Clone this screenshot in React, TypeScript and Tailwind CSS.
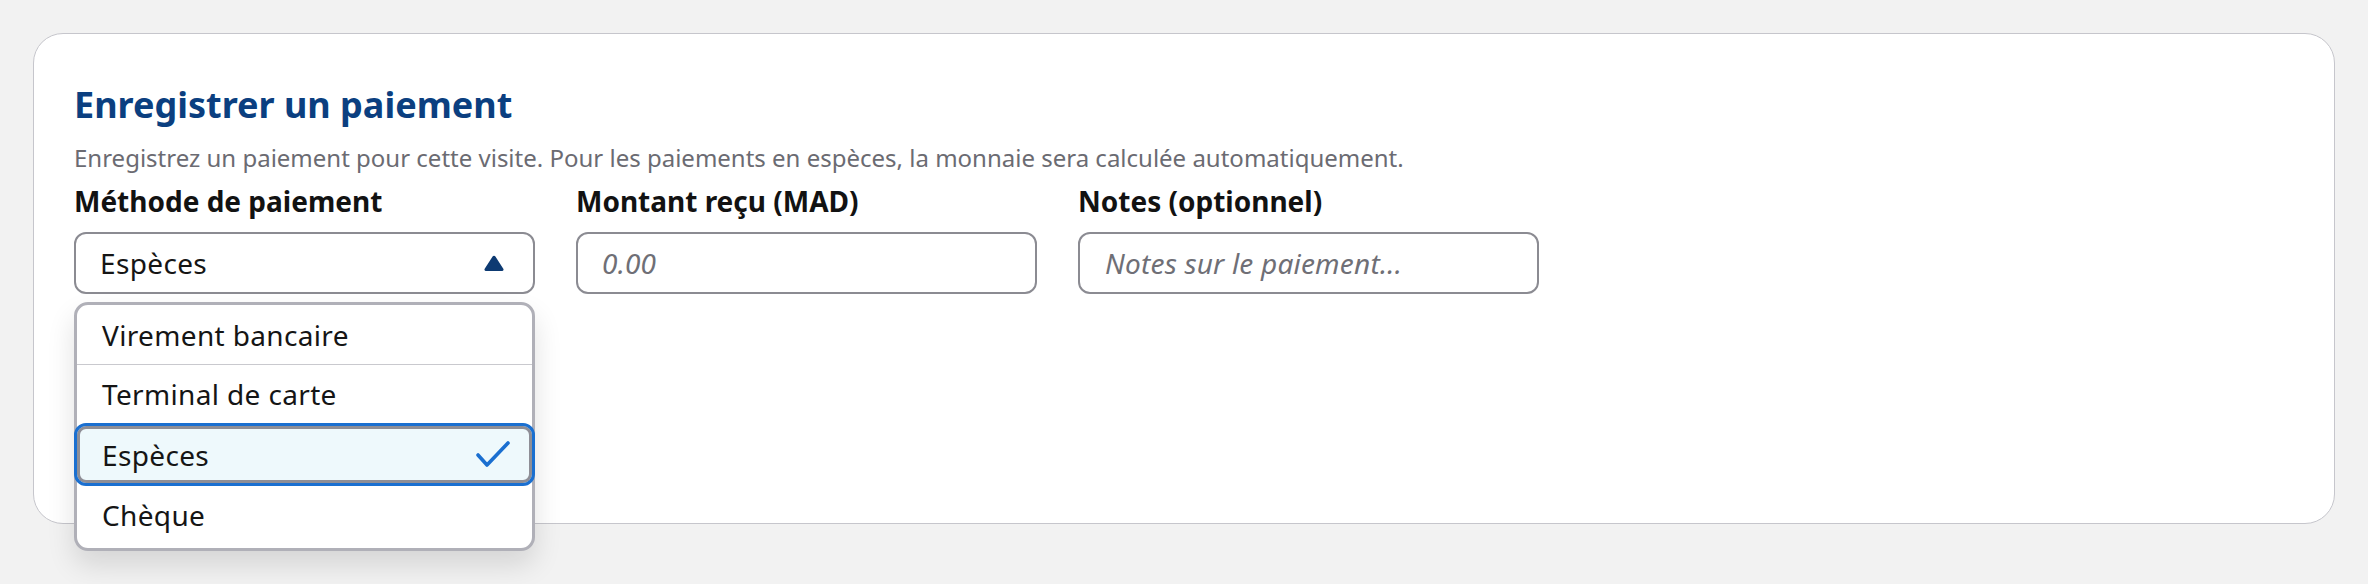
const methods = ["Virement bancaire", "Terminal de carte", "Espèces", "Chèque"];

const font = "font-['Noto_Sans',sans-serif]";

function CaretUp() {
  return (
    <svg width="20" height="16" viewBox="0 0 20 16" aria-hidden="true">
      <path d="M8.6 1.6a1.6 1.6 0 0 1 2.8 0l7.9 12.2a1.4 1.4 0 0 1-1.2 2.2H1.9a1.4 1.4 0 0 1-1.2-2.2z" fill="#0d3a72" />
    </svg>
  );
}

function Check() {
  return (
    <svg width="34" height="28" viewBox="0 0 34 28" aria-hidden="true">
      <polyline
        points="2,14 11,24 32,2"
        fill="none"
        stroke="#1a6fd0"
        strokeWidth="3.6"
        strokeLinecap="round"
        strokeLinejoin="round"
      />
    </svg>
  );
}

function MethodMenu() {
  return (
    <div className="absolute left-0 top-[118px] w-[461px] rounded-[14px] border-[3px] border-[#b0b0b8] bg-white pb-[4px] shadow-[0_14px_28px_rgba(0,0,0,0.12)]">
      {methods.map((m, i) => {
        if (m === "Espèces") {
          return (
            <div
              key={m}
              className="-mx-[3px] flex h-[63px] items-center justify-between rounded-[12px] border-[3px] border-[#1a6fd0] bg-[#eef9fc] pl-[25px] pr-[22px] shadow-[inset_0_0_0_3px_#8e8e96]"
            >
              <span className="text-[28px] tracking-[0.35px] text-[#151515]">{m}</span>
              <Check />
            </div>
          );
        }
        return (
          <div
            key={m}
            className={
              i === 0
                ? "flex h-[60px] items-center border-b-[1.5px] border-[#c9c9ce] pl-[25px]"
                : "flex h-[58px] items-center pl-[25px]"
            }
          >
            <span className="text-[28px] tracking-[0.35px] text-[#151515]">{m}</span>
          </div>
        );
      })}
    </div>
  );
}

function Field({ label, children }: { label: string; children: React.ReactNode }) {
  return (
    <div className="relative flex w-[461px] flex-col">
      <label className="text-[28px] font-bold leading-[34px] text-[#121212]">{label}</label>
      <div className="mt-[14px]">{children}</div>
    </div>
  );
}

export default function App() {
  return (
    <div className={`${font} min-h-[584px] bg-[#f2f2f2] px-[33px] pt-[33px]`}>
      <div className="h-[491px] rounded-[30px] border-[1.5px] border-[#c6c6cc] bg-white px-[40px] pt-[49px]">
        <h2 className="text-[36px] font-bold leading-[44px] text-[#0b3f80]">Enregistrer un paiement</h2>
        <p className="mt-[16px] text-[24px] leading-[30px] text-[#6b6b72]">
          Enregistrez un paiement pour cette visite. Pour les paiements en espèces, la monnaie sera calculée
          automatiquement.
        </p>
        <div className="mt-[11px] flex gap-[41px]">
          <Field label="Méthode de paiement">
            <div className="flex h-[62px] items-center justify-between rounded-[12px] border-2 border-[#8b8b92] bg-white pl-[24px] pr-[29px]">
              <span className="text-[28px] tracking-[0.35px] text-[#151515]">Espèces</span>
              <CaretUp />
            </div>
            <MethodMenu />
          </Field>
          <Field label="Montant reçu (MAD)">
            <div className="flex h-[62px] items-center rounded-[12px] border-2 border-[#8b8b92] bg-white pl-[24px]">
              <span className="text-[28px] italic tracking-[0.2px] text-[#6f6f76]">0.00</span>
            </div>
          </Field>
          <Field label="Notes (optionnel)">
            <div className="flex h-[62px] items-center rounded-[12px] border-2 border-[#8b8b92] bg-white pl-[25px]">
              <span className="text-[28px] italic tracking-[0.2px] text-[#6f6f76]">Notes sur le paiement...</span>
            </div>
          </Field>
        </div>
      </div>
    </div>
  );
}
